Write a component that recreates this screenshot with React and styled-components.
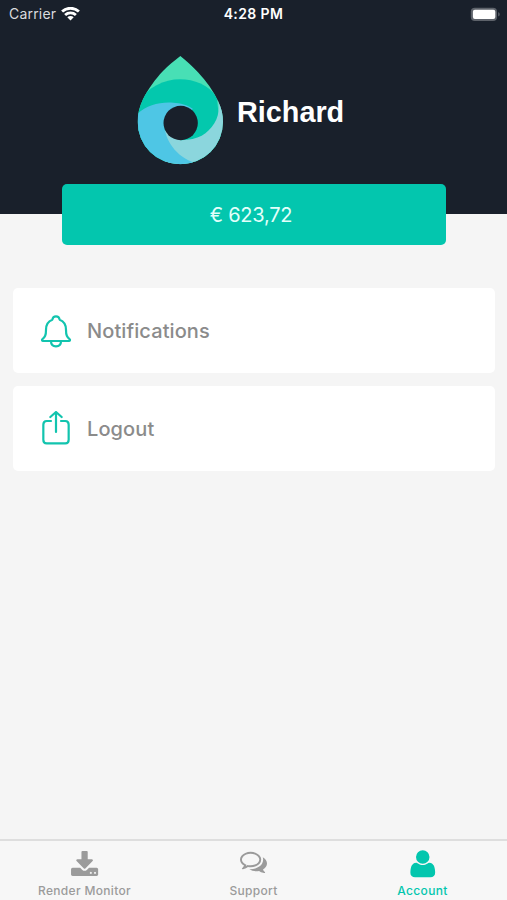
import React, { useState } from 'react';
import styled, { createGlobalStyle } from 'styled-components';

const GlobalStyle = createGlobalStyle`
  * {
    box-sizing: border-box;
  }
  body {
    margin: 0;
    background-color: #f5f5f5;
    font-family: Inter, 'Liberation Sans', sans-serif;
  }
  svg {
    display: block;
  }
`;

const ScreenStyle = styled.div`
  display: flex;
  flex-direction: column;
  height: 900px;
  background-color: #f5f5f5;
  overflow: hidden;
`;

const Header = styled.header`
  height: 214px;
  flex-shrink: 0;
  background-color: #19202b;
`;

const StatusBar = styled.div`
  display: grid;
  grid-template-columns: 1fr auto 1fr;
  align-items: center;
  height: 28px;
  padding: 0 6px 0 9px;
  color: #fff;
  font-size: 14px;
  line-height: 18px;

  .status__carrier {
    display: flex;
    align-items: center;
    gap: 5px;
    color: #d9dbde;
    letter-spacing: 0.2px;
  }
  .status__time {
    margin-right: 3px;
    font-weight: 600;
    font-size: 14px;
    letter-spacing: 0.4px;
  }
  .status__battery {
    justify-self: end;
  }
`;

const Profile = styled.div`
  display: flex;
  align-items: center;
  gap: 13px;
  padding: 27px 0 0 137px;
`;

const UserName = styled.h1`
  margin: 3px 0 0;
  color: #fff;
  font-family: 'Liberation Sans', sans-serif;
  font-size: 28.8px;
  font-weight: 700;
  line-height: 34px;
`;

const Balance = styled.div`
  display: flex;
  align-items: center;
  justify-content: center;
  flex-shrink: 0;
  height: 61px;
  margin: -30px 61px 0 62px;
  padding: 1px 6px 0 0;
  border-radius: 5px;
  background-color: #03c6ae;
  color: #e2fffa;
  font-size: 20px;
  letter-spacing: -0.25px;
  z-index: 1;
`;

const Menu = styled.div`
  display: flex;
  flex-direction: column;
  flex: 1;
  gap: 13px;
  padding: 43px 12px 0 13px;
`;

const MenuItem = styled.button`
  display: flex;
  align-items: center;
  gap: 15px;
  height: 85px;
  padding: 0 0 0 27px;
  border: none;
  border-radius: 5px;
  background-color: #fff;
  color: #8b8b8b;
  font-family: inherit;
  font-size: 20px;
  font-weight: 500;
  letter-spacing: 0.1px;
  cursor: pointer;
`;

const TabBar = styled.nav`
  display: grid;
  grid-template-columns: repeat(3, 1fr);
  height: 61px;
  flex-shrink: 0;
  border-top: 2px solid #dedede;
  background-color: #f7f7f7;
`;

const Tab = styled.button`
  display: flex;
  flex-direction: column;
  align-items: center;
  gap: 3px;
  padding: 5px 0 0;
  border: none;
  background: none;
  color: ${({ $active }) => ($active ? '#03c6ae' : '#9b9b9b')};
  font-family: inherit;
  font-size: 12px;
  font-weight: 500;
  line-height: 16px;
  letter-spacing: 0.32px;
  cursor: pointer;

  .tab__icon {
    display: flex;
    align-items: center;
    justify-content: center;
    height: 34px;
    padding-top: ${({ $iconTop }) => $iconTop}px;
    padding-bottom: ${({ $iconBottom }) => $iconBottom}px;
  }
`;

const WifiIcon = () => (
  <svg width="19" height="14" viewBox="0 0 19 14" fill="none" stroke="#fff" strokeWidth="2.8">
    <path d="M1.1 4.6C5.8.1 13.2.1 17.9 4.6" />
    <path d="M4.1 7.9C7.1 5.1 11.9 5.1 14.9 7.9" />
    <path d="M9.5 13.4 6.3 10.3C8.1 8.7 10.9 8.7 12.7 10.3Z" fill="#fff" stroke="none" />
  </svg>
);

const BatteryIcon = () => (
  <svg width="31" height="15" viewBox="0 0 31 15">
    <rect x="0.8" y="0.7" width="26.2" height="13.4" rx="4" fill="#5d626a" />
    <rect x="2.9" y="2.8" width="22.4" height="9.2" rx="2" fill="#fff" />
    <path d="M28.2 5.3c2 .6 2 3.6 0 4.2z" fill="#5d626a" />
  </svg>
);

const DropLogo = () => (
  <svg width="87" height="110" viewBox="36 30 261 330">
    <defs>
      <clipPath id="drop">
        <path d="M166 33C184 48 203 64 219 82C245 110 265 138 279 168C290 190 294 210 294 231A128 127 0 0 1 38 231C38 207 43 187 54 163C69 133 91 102 114 78C130 61 147 48 166 33Z" />
      </clipPath>
    </defs>
    <g clipPath="url(#drop)">
      <rect x="36" y="30" width="261" height="330" fill="#48dfb5" />
      <path d="M30 185C60 130 115 103 165 103C208 103 250 120 275 156L300 370H30Z" fill="#03c8ad" />
      <path d="M272 150C284 172 286 205 268 235C248 267 220 285 168 286L110 250L120 370H310V170Z" fill="#8bd6dd" />
      <path d="M30 214C62 180 102 170 145 173C166 174 187 179 204 192L118 240C120 283 151 336 212 354L180 370H30Z" fill="#4ec6e5" />
    </g>
    <circle cx="167" cy="234" r="51.5" fill="#19202b" />
  </svg>
);

const BellIcon = () => (
  <svg width="32" height="36" viewBox="120 98 96 108" fill="none" stroke="#12c4ae" strokeWidth="6.6" strokeLinejoin="round">
    <path d="M168 108C161 108 158 112 157 118C144 123 138 133 138 148C138 166 135 169 127 177C125 179 126 182 129 182H207C210 182 211 179 209 177C201 169 198 166 198 148C198 133 192 123 179 118C178 112 175 108 168 108Z" />
    <path d="M153 183C153 192 159 198 168 198S183 192 183 183" />
  </svg>
);

const ShareIcon = () => (
  <svg width="32" height="36" viewBox="120 393 96 108" fill="none" stroke="#12c4ae" strokeWidth="6.6" strokeLinecap="round" strokeLinejoin="round">
    <path d="M153 423H140Q130 423 130 434V479Q130 490 140 490H196Q206 490 206 479V434Q206 423 196 423H183" />
    <path d="M168 456V397M151 411L168 396L185 411" />
  </svg>
);

const DownloadIcon = () => (
  <svg width="29.2" height="29.2" viewBox="0 0 1792 1792" fill="currentColor">
    <path d="M1344 1344q0-26-19-45t-45-19-45 19-19 45 19 45 45 19 45-19 19-45zm256 0q0-26-19-45t-45-19-45 19-19 45 19 45 45 19 45-19 19-45zm128-224v320q0 40-28 68t-68 28h-1472q-40 0-68-28t-28-68v-320q0-40 28-68t68-28h465l135 136q58 56 136 56t136-56l136-136h464q40 0 68 28t28 68zm-325-569q17 41-14 70l-448 448q-18 19-45 19t-45-19l-448-448q-31-29-14-70 17-39 59-39h256v-448q0-26 19-45t45-19h256q26 0 45 19t19 45v448h256q42 0 59 39z" />
  </svg>
);

const CommentsIcon = () => (
  <svg width="27" height="27" viewBox="0 0 1792 1792" fill="currentColor">
    <path d="M704 384q-153 0-286 52t-211.5 141-78.5 191q0 82 53 158t149 132l97 56-35 84q34-20 62-39l44-31 53 10q78 14 153 14 153 0 286-52t211.5-141 78.5-191-78.5-191-211.5-141-286-52zm0-128q191 0 353.5 68.5t256.5 186.5 94 257-94 257-256.5 186.5-353.5 68.5q-86 0-176-16-124 88-278 128-36 9-86 16h-3q-11 0-20.5-8t-11.5-21q-1-3-1-6.5t.5-6.5 2-6l2.5-5 3.5-5.5 4-5 4.5-5 4-4.5q5-6 23-25t26-29.5 22.5-29 25-38.5 20.5-44q-124-72-195-177t-71-224q0-139 94-257t256.5-186.5 353.5-68.5zm822 1169q10 24 20.5 44t25 38.5 22.5 29 26 29.5 23 25q1 1 4 4.5t4.5 5 4 5 3.5 5.5l2.5 5 2 6 .5 6.5-1 6.5q-3 14-13 22t-22 7q-50-7-86-16-154-40-278-128-90 16-176 16-271 0-472-132 58 4 88 4 161 0 309-45t264-129q125-92 192-212t67-254q0-77-23-152 129 71 204 178t75 230q0 120-71 224.5t-195 176.5z" />
  </svg>
);

const UserIcon = () => (
  <svg width="31.5" height="31.5" viewBox="0 0 1792 1792" fill="currentColor">
    <path d="M1600 1405q0 120-73 189.5t-194 69.5h-874q-121 0-194-69.5t-73-189.5q0-53 3.5-103.5t14-109 26.5-108.5 43-97.5 62-81 85.5-53.5 111.5-20q9 0 42 21.5t74.5 48 108 48 133.5 21.5 133.5-21.5 108-48 74.5-48 42-21.5q61 0 111.5 20t85.5 53.5 62 81 43 97.5 26.5 108.5 14 109 3.5 103.5zm-320-893q0 159-112.5 271.5t-271.5 112.5-271.5-112.5-112.5-271.5 112.5-271.5 271.5-112.5 271.5 112.5 112.5 271.5z" />
  </svg>
);

const tabs = [
  { name: 'Render Monitor', Icon: DownloadIcon, iconTop: 4.5 },
  { name: 'Support', Icon: CommentsIcon, iconBottom: 2.5 },
  { name: 'Account', Icon: UserIcon, iconTop: 1 },
];

const App = () => {
  const [activeTab, setActiveTab] = useState('Account');

  return (
    <>
      <GlobalStyle />
      <ScreenStyle>
        <Header>
          <StatusBar>
            <div className="status__carrier">
              Carrier
              <WifiIcon />
            </div>
            <div className="status__time">4:28 PM</div>
            <div className="status__battery">
              <BatteryIcon />
            </div>
          </StatusBar>
          <Profile>
            <DropLogo />
            <UserName>Richard</UserName>
          </Profile>
        </Header>
        <Balance>€ 623,72</Balance>
        <Menu>
          <MenuItem>
            <BellIcon />
            Notifications
          </MenuItem>
          <MenuItem>
            <ShareIcon />
            Logout
          </MenuItem>
        </Menu>
        {/* Tabs */}
        <TabBar>
          {tabs.map(({ name, Icon, iconTop = 0, iconBottom = 0 }) => (
            <Tab
              key={name}
              $active={activeTab === name}
              $iconTop={iconTop}
              $iconBottom={iconBottom}
              onClick={() => setActiveTab(name)}
            >
              <span className="tab__icon">
                <Icon />
              </span>
              {name}
            </Tab>
          ))}
        </TabBar>
      </ScreenStyle>
    </>
  );
};

export default App;
